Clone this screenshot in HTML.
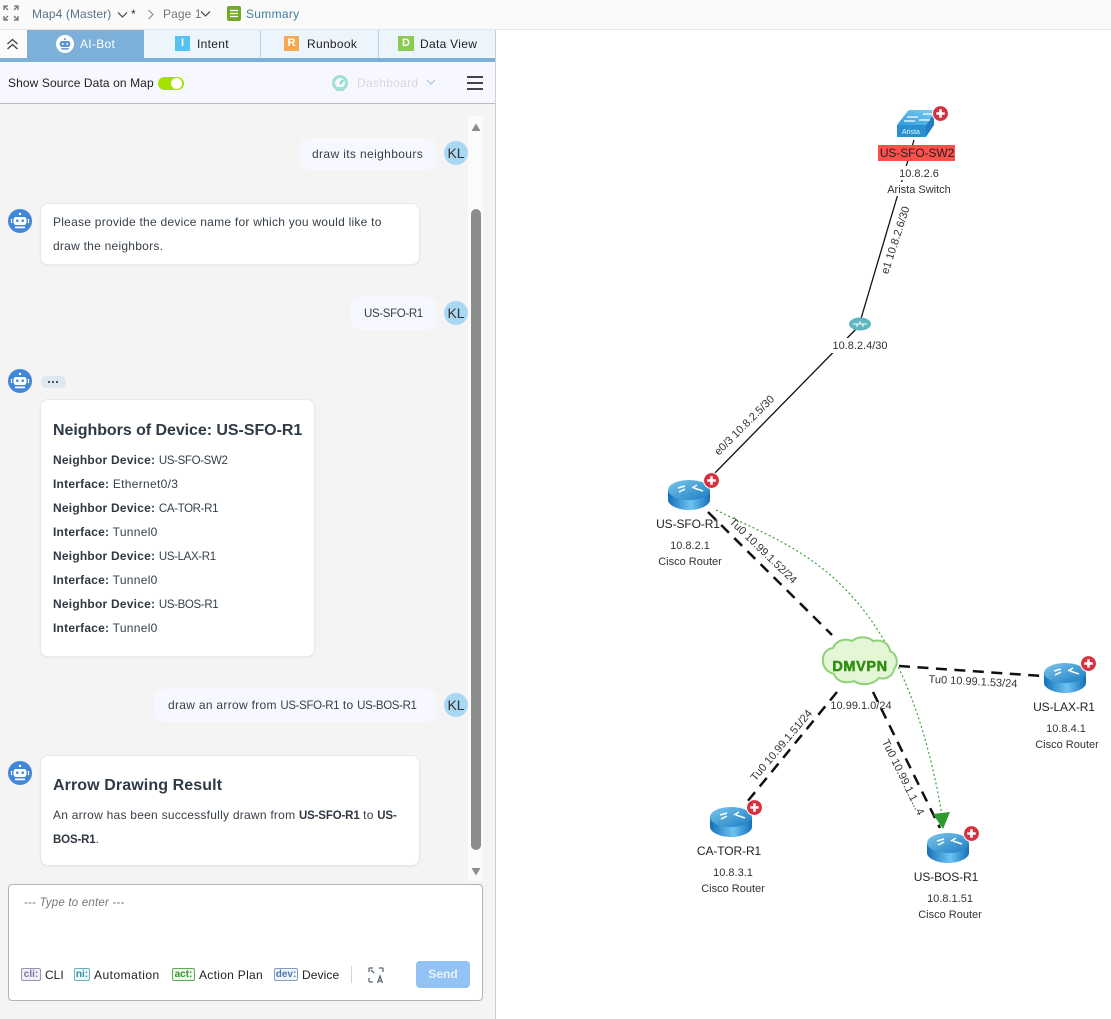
<!DOCTYPE html>
<html><head><meta charset="utf-8"><style>
*{box-sizing:border-box}
html,body{margin:0;padding:0;width:1111px;height:1019px;overflow:hidden;background:#fff;font-family:"Liberation Sans",sans-serif;color:#333}
.a{position:absolute;white-space:nowrap}
.t{position:absolute;white-space:nowrap;font-size:12px;letter-spacing:.3px;line-height:16px;color:#36404a}
.t b{font-weight:bold;letter-spacing:.22px;color:#2e3842}
.u{font-size:11.5px;letter-spacing:-.35px}
.t b.u{font-size:11.5px;letter-spacing:-.15px}
.h{font-size:16px;font-weight:bold;line-height:20px;color:#2e3a45;letter-spacing:-.05px}
.b{position:absolute;border-radius:8px;background:#f7f8ff}
.c{position:absolute;border-radius:8px;background:#fff;border:1px solid #e8e8e8;box-shadow:0 1px 2px rgba(0,0,0,.05)}
.kl{position:absolute;left:444px;width:24px;height:24px;border-radius:50%;background:#a9d8f5;color:#333;font-size:14px;line-height:24px;text-align:center}
.tab{position:absolute;top:30px;height:28px;background:#edf5fc;border-right:1px solid #b9d3e8;font-size:12px;letter-spacing:.3px;line-height:28px;color:#222}
.ic{position:absolute;top:6px;width:15px;height:15px;color:#fff;font:bold 11px/15px "Liberation Sans",sans-serif;text-align:center;letter-spacing:0}
.tag{position:absolute;top:968px;height:13px;border:1px solid;border-radius:2px;font:bold 10px/11px "Liberation Sans",sans-serif;text-align:center;letter-spacing:0}
svg text{font-family:"Liberation Sans",sans-serif;font-size:11px;fill:#333;text-anchor:middle}
svg text.n{font-size:12px;fill:#222;letter-spacing:-.1px}
</style></head><body>

<!-- top bar -->
<div class="a" style="left:0;top:0;width:1111px;height:30px;background:#fafafa;border-bottom:1px solid #e6e6e6"></div>
<svg class="a" style="left:3px;top:5px" width="16" height="16" fill="none" stroke="#666" stroke-width="1.2"><path d="M1 5V1h4M11 1h4v4M1 11v4h4M15 11v4h-4M2 2l3 3M14 2l-3 3M2 14l3-3M14 14l-3-3"/></svg>
<div class="t" style="left:32px;top:6px;color:#5b7287;letter-spacing:.1px">Map4 (Master)</div>
<svg class="a" style="left:117px;top:11px" width="11" height="8" fill="none" stroke="#555" stroke-width="1.3"><path d="M1 1.5l4.500 4.500 4.500-4.500"/></svg>
<div class="t" style="left:131px;top:6px;color:#333">*</div>
<svg class="a" style="left:147px;top:9px" width="8" height="11" fill="none" stroke="#888" stroke-width="1.100"><path d="M1.500 1l4.500 4.500-4.500 4.500"/></svg>
<div class="t" style="left:163px;top:6px;color:#777;letter-spacing:.1px">Page 1</div>
<svg class="a" style="left:200px;top:10px" width="11" height="8" fill="none" stroke="#555" stroke-width="1.300"><path d="M1 1.500l4.500 4.500 4.500-4.500"/></svg>
<svg class="a" style="left:227px;top:6px" width="15" height="16"><rect width="14" height="15" rx="2" fill="#75a92a"/><path d="M3 4.500h8M3 7.500h8M3 10.500h8" stroke="#fff" stroke-width="1.300"/></svg>
<div class="t" style="left:246px;top:6px;color:#3f7d9e">Summary</div>

<!-- left panel -->
<div class="a" style="left:0;top:30px;width:496px;height:989px;background:#f4f4f4;border-right:1px solid #cfcfcf"></div>

<!-- tabs -->
<div class="a" style="left:0;top:30px;width:27px;height:28px;background:#fbfbfb"></div>
<svg class="a" style="left:6px;top:38px" width="13" height="12" fill="none" stroke="#444" stroke-width="1.300"><path d="M1.500 6l5-4.500 5 4.500M1.500 11l5-4.500 5 4.500"/></svg>
<div class="tab" style="left:27px;width:117px;background:#7db0d9;color:#fff;border:0"><span class="a" style="left:53px">AI-Bot</span></div>
<svg class="a" style="left:56px;top:35px" width="18" height="18" viewBox="0 0 24 24"><circle cx="12" cy="12" r="12" fill="#fff"/><rect x="5" y="8" width="14" height="8" rx="3" fill="#5c93d8"/><circle cx="9" cy="12" r="1.300" fill="#fff"/><circle cx="15" cy="12" r="1.300" fill="#fff"/><rect x="7" y="17.500" width="10" height="2" fill="#5c93d8"/><circle cx="12" cy="5.500" r="1.300" fill="#5c93d8"/></svg>
<div class="tab" style="left:144px;width:117px"><span class="a" style="left:53px">Intent</span><span class="ic" style="left:31px;background:#55c3f2">I</span></div>
<div class="tab" style="left:261px;width:118px"><span class="a" style="left:46px">Runbook</span><span class="ic" style="left:23px;background:#f5a951">R</span></div>
<div class="tab" style="left:379px;width:116px;border-right:0"><span class="a" style="left:41px">Data View</span><span class="ic" style="left:19px;background:#8acb55;width:16px">D</span></div>
<div class="a" style="left:0;top:58px;width:495px;height:4px;background:#7db0d9"></div>

<!-- toolbar -->
<div class="a" style="left:0;top:62px;width:495px;height:42px;background:#f7f8ff;border-bottom:1px solid #bdbdbd"></div>
<div class="t" style="left:8px;top:75px;color:#222;letter-spacing:.1px">Show Source Data on Map</div>
<div class="a" style="left:158px;top:77px;width:26px;height:13px;border-radius:7px;background:#a5e000"></div>
<div class="a" style="left:171px;top:78px;width:11px;height:11px;border-radius:50%;background:#fff"></div>
<svg class="a" style="left:332px;top:75px" width="16" height="16" viewBox="0 0 16 16"><circle cx="8" cy="8" r="8" fill="#9fe0d8"/><circle cx="8" cy="8" r="5" fill="#f7f8ff"/><path d="M8 9l3-4" stroke="#7fd3ca" stroke-width="2"/><rect x="4" y="12" width="8" height="4" fill="#9fe0d8"/></svg>
<div class="t" style="left:357px;top:75px;color:#d6d8dc">Dashboard</div>
<svg class="a" style="left:426px;top:79px" width="10" height="7" fill="none" stroke="#a9c5de" stroke-width="1.200"><path d="M1 1l4 4 4-4"/></svg>
<div class="a" style="left:467px;top:76px;width:16px;height:2px;background:#444"></div>
<div class="a" style="left:467px;top:82px;width:16px;height:2px;background:#444"></div>
<div class="a" style="left:467px;top:88px;width:16px;height:2px;background:#444"></div>

<!-- scrollbar -->
<div class="a" style="left:468px;top:116px;width:15px;height:765px;background:#fbfbfb"></div>
<div class="a" style="left:471px;top:209px;width:10px;height:641px;border-radius:5px;background:#8c8c8c"></div>
<svg class="a" style="left:470px;top:122px" width="12" height="10"><path d="M1.500 9L6 1.500 10.500 9z" fill="#8c8c8c"/></svg>
<svg class="a" style="left:470px;top:867px" width="12" height="10"><path d="M1.500 1L6 8.500 10.500 1z" fill="#8c8c8c"/></svg>

<!-- chat -->
<div class="b" style="left:300px;top:138px;width:136px;height:32px"></div>
<div class="t" style="left:312px;top:146px;letter-spacing:.37px">draw its neighbours</div>
<div class="kl" style="top:141px">KL</div>

<svg width="0" height="0" style="position:absolute"><defs>
<symbol id="bot" viewBox="0 0 24 24"><circle cx="12" cy="12" r="12" fill="#4188da"/><rect x="5.500" y="8" width="13" height="8" rx="2.500" fill="#fff"/><rect x="8" y="10.500" width="2.500" height="2.500" rx="1" fill="#4188da"/><rect x="13.500" y="10.500" width="2.500" height="2.500" rx="1" fill="#4188da"/><rect x="7" y="17.500" width="10" height="1.800" fill="#fff"/><circle cx="12" cy="5" r="1.200" fill="#fff"/><path d="M3.500 10v4M20.500 10v4" stroke="#fff" stroke-width="1.200"/></symbol>
<linearGradient id="rg" x1="0" x2="1" y1="0" y2="0"><stop offset="0" stop-color="#1570b8"/><stop offset=".55" stop-color="#6cc4f2"/><stop offset="1" stop-color="#1570b8"/></linearGradient>
<linearGradient id="rt" x1="0" x2="1" y1="0" y2="1"><stop offset="0" stop-color="#7cc7ee"/><stop offset="1" stop-color="#1b7cc0"/></linearGradient>
<linearGradient id="st" x1="0" x2="1" y1="1" y2="0"><stop offset="0" stop-color="#2f9bdc"/><stop offset="1" stop-color="#7ccdf2"/></linearGradient>
<symbol id="router" viewBox="0 0 42 30" overflow="visible"><path d="M0 10v10c0 5 9.500 10 21 10s21-5 21-10V10z" fill="url(#rg)"/><ellipse cx="21" cy="10" rx="21" ry="10" fill="url(#rt)"/><path d="M10 8l7-2M11 12l6-3M24 8l5-3M26 8l9 3" stroke="#fff" stroke-width="1.500" fill="none"/></symbol>
<symbol id="plus" viewBox="0 0 16 16"><circle cx="8" cy="8" r="7.500" fill="#d7303e" stroke="#fff" stroke-width="1"/><path d="M8 4v8M4 8h8" stroke="#fff" stroke-width="2.400"/></symbol>
</defs></svg>

<svg class="a" style="left:8px;top:209px" width="24" height="24"><use href="#bot"/></svg>
<div class="c" style="left:40px;top:203px;width:380px;height:62px"></div>
<div class="t" style="left:53px;top:214px;letter-spacing:.25px">Please provide the device name for which you would like to</div>
<div class="t" style="left:53px;top:238px;letter-spacing:.25px">draw the neighbors.</div>

<div class="b" style="left:351px;top:297px;width:85px;height:33px"></div>
<div class="t" style="left:364px;top:305px"><span class="u">US-SFO-R1</span></div>
<div class="kl" style="top:301px">KL</div>

<svg class="a" style="left:8px;top:369px" width="24" height="24"><use href="#bot"/></svg>
<div class="a" style="left:41px;top:376px;width:25px;height:12px;border-radius:5px;background:#dde8f0"></div>
<div class="a" style="left:48px;top:381px;width:2px;height:2px;background:#456;box-shadow:4px 0 #456,8px 0 #456"></div>

<div class="c" style="left:40px;top:399px;width:275px;height:258px"></div>
<div class="t h" style="left:53px;top:421px">Neighbors of Device: US-SFO-R1</div>
<div class="t" style="left:53px;top:452px"><b>Neighbor Device:</b> <span class="u">US-SFO-SW2</span></div>
<div class="t" style="left:53px;top:476px"><b>Interface:</b> Ethernet0/3</div>
<div class="t" style="left:53px;top:500px"><b>Neighbor Device:</b> <span class="u">CA-TOR-R1</span></div>
<div class="t" style="left:53px;top:524px"><b>Interface:</b> Tunnel0</div>
<div class="t" style="left:53px;top:548px"><b>Neighbor Device:</b> <span class="u">US-LAX-R1</span></div>
<div class="t" style="left:53px;top:572px"><b>Interface:</b> Tunnel0</div>
<div class="t" style="left:53px;top:596px"><b>Neighbor Device:</b> <span class="u">US-BOS-R1</span></div>
<div class="t" style="left:53px;top:620px"><b>Interface:</b> Tunnel0</div>

<div class="b" style="left:155px;top:689px;width:281px;height:33px"></div>
<div class="t" style="left:168px;top:697px">draw an arrow from <span class="u">US-SFO-R1</span> to <span class="u">US-BOS-R1</span></div>
<div class="kl" style="top:693px">KL</div>

<svg class="a" style="left:8px;top:761px" width="24" height="24"><use href="#bot"/></svg>
<div class="c" style="left:40px;top:755px;width:380px;height:111px"></div>
<div class="t h" style="left:53px;top:776px;letter-spacing:.1px">Arrow Drawing Result</div>
<div class="t" style="left:53px;top:807px;letter-spacing:.25px">An arrow has been successfully drawn from <b class="u">US-SFO-R1</b> to <b class="u">US-</b></div>
<div class="t" style="left:53px;top:831px"><b class="u">BOS-R1</b>.</div>

<!-- input -->
<div class="a" style="left:8px;top:884px;width:475px;height:117px;background:#fff;border:1px solid #b0b4b8;border-radius:4px"></div>
<div class="t" style="left:24px;top:895px;font-size:11.500px;font-style:italic;color:#777;letter-spacing:.2px">--- Type to enter ---</div>
<div class="tag" style="left:21px;width:20px;color:#7d6f9c;border-color:#9d93b8;background:#f2f0f7">cli:</div>
<div class="t" style="left:45px;top:967px;color:#222;letter-spacing:0">CLI</div>
<div class="tag" style="left:74px;width:16px;color:#2f8da5;border-color:#6ab0c2;background:#eef8fb">ni:</div>
<div class="t" style="left:94px;top:967px;color:#222;letter-spacing:.5px">Automation</div>
<div class="tag" style="left:172px;width:23px;color:#3b9230;border-color:#5fa956;background:#f1f9ef">act:</div>
<div class="t" style="left:199px;top:967px;color:#222">Action Plan</div>
<div class="tag" style="left:274px;width:24px;color:#4a78a8;border-color:#7d9fc2;background:#eff5fb">dev:</div>
<div class="t" style="left:302px;top:967px;color:#222;letter-spacing:.1px">Device</div>
<div class="a" style="left:351px;top:966px;width:1px;height:17px;background:#d5d5d5"></div>
<svg class="a" style="left:368px;top:967px" width="17" height="17" fill="none" stroke="#5a6672" stroke-width="1.300"><path d="M1 5V2a1 1 0 0 1 1-1h3M11 1h3a1 1 0 0 1 1 1v3M1 11v3a1 1 0 0 0 1 1h3M3 3l3 3"/><path d="M9.500 16l2.500-7 2.500 7M10.500 14h3"/></svg>
<div class="a" style="left:416px;top:961px;width:54px;height:27px;border-radius:4px;background:#93c2f5;color:#e8f2fd;font-weight:bold;font-size:12px;line-height:27px;text-align:center">Send</div>

<!-- map -->
<svg class="a" style="left:496px;top:0" width="615" height="1019" viewBox="496 0 615 1019">
<g fill="none" stroke="#111" stroke-width="1.300">
<path d="M914 140L860 322"/>
<path d="M860 325L710 478"/>
</g>
<g fill="none" stroke="#111" stroke-width="2.500" stroke-dasharray="11 7.500">
<path d="M708 512L832 635"/>
<path d="M899 666L1042 676"/>
<path d="M837 692L747 802"/>
<path d="M873 692L940 828"/>
</g>
<path d="M716 510C790 548 900 570 942 815" fill="none" stroke="#3f9f3f" stroke-width="1.200" stroke-dasharray="2 2.500"/>
<path d="M933 814L950 812L943 829z" fill="#2c9a2c"/>

<rect x="830" y="338" width="62" height="15" fill="#fff"/>
<rect x="878" y="145" width="77" height="16" fill="#f9504a"/>
<rect x="890" y="166" width="58" height="14" fill="#fff"/>
<rect x="884" y="182" width="70" height="14" fill="#fff"/>

<!-- SW2 icon -->
<path d="M897 125L907 112Q908 110 911 110H933Q936 110 934 113L926 125z" fill="url(#st)"/>
<path d="M897 125h29v12h-29z" fill="#2a90d0"/>
<path d="M926 125l8-12v12l-8 12z" fill="#2380c0"/>
<path d="M907 117h11M923 114h9M904 121h11M919 120h11" stroke="#fff" stroke-width="1.200"/>
<text x="911" y="134" style="font-size:7px;fill:#dff">Arista</text>
<use href="#plus" x="932" y="105" width="17" height="17"/>

<!-- hub -->
<ellipse cx="860" cy="324" rx="11" ry="6.500" fill="#5fb5c0"/>
<path d="M853 324h14M857 327v-3M863 327v-3M860 321v3" stroke="#fff" stroke-width="1.100" fill="none"/>

<!-- DMVPN cloud -->
<path d="M833 648c3-8 13-10 19-7 6-5 16-5 21 0 8-2 16 2 17 10 7 3 9 12 4 18-1 7-8 11-15 9-6 7-18 8-25 3-8 3-17 1-20-7-8-2-12-9-11-15 0-6 4-10 10-11z" fill="#e3f6d5" stroke="#8ed279" stroke-width="2"/>
<text x="860" y="671" style="font-size:14.500px;font-weight:bold;fill:#2e8f10;stroke:#2e8f10;stroke-width:.5;letter-spacing:.6px">DMVPN</text>

<!-- routers -->
<use href="#router" x="668" y="480" width="42" height="30"/>
<use href="#router" x="1044" y="663" width="42" height="30"/>
<use href="#router" x="710" y="807" width="42" height="30"/>
<use href="#router" x="927" y="833" width="42" height="30"/>
<use href="#plus" x="703" y="472" width="17" height="17"/>
<use href="#plus" x="1080" y="655" width="17" height="17"/>
<use href="#plus" x="746" y="799" width="17" height="17"/>
<use href="#plus" x="963" y="825" width="17" height="17"/>

<!-- labels -->
<text class="n" x="917" y="157">US-SFO-SW2</text>
<text x="919" y="177">10.8.2.6</text>
<text x="919" y="193">Arista Switch</text>
<text x="860" y="349">10.8.2.4/30</text>
<text class="n" x="688" y="528">US-SFO-R1</text>
<text x="690" y="549">10.8.2.1</text>
<text x="690" y="565">Cisco Router</text>
<text x="861" y="709">10.99.1.0/24</text>
<text class="n" x="1064" y="711">US-LAX-R1</text>
<text x="1066" y="732">10.8.4.1</text>
<text x="1067" y="748">Cisco Router</text>
<text class="n" x="729" y="855">CA-TOR-R1</text>
<text x="733" y="876">10.8.3.1</text>
<text x="733" y="892">Cisco Router</text>
<text class="n" x="946" y="881">US-BOS-R1</text>
<text x="950" y="902">10.8.1.51</text>
<text x="950" y="918">Cisco Router</text>

<text transform="translate(895 240) rotate(-72)" x="0" y="4">e1 10.8.2.6/30</text>
<text transform="translate(744 425) rotate(-45)" x="0" y="4">e0/3 10.8.2.5/30</text>
<text transform="translate(763.500 550.500) rotate(44)" x="0" y="4">Tu0 10.99.1.52/24</text>
<text transform="translate(973 681) rotate(3)" x="0" y="4">Tu0 10.99.1.53/24</text>
<text transform="translate(781 745) rotate(-50)" x="0" y="4">Tu0 10.99.1.51/24</text>
<text transform="translate(903.500 777) rotate(64)" x="0" y="4">Tu0 10.99.1.1...4</text>
</svg>
</body></html>
